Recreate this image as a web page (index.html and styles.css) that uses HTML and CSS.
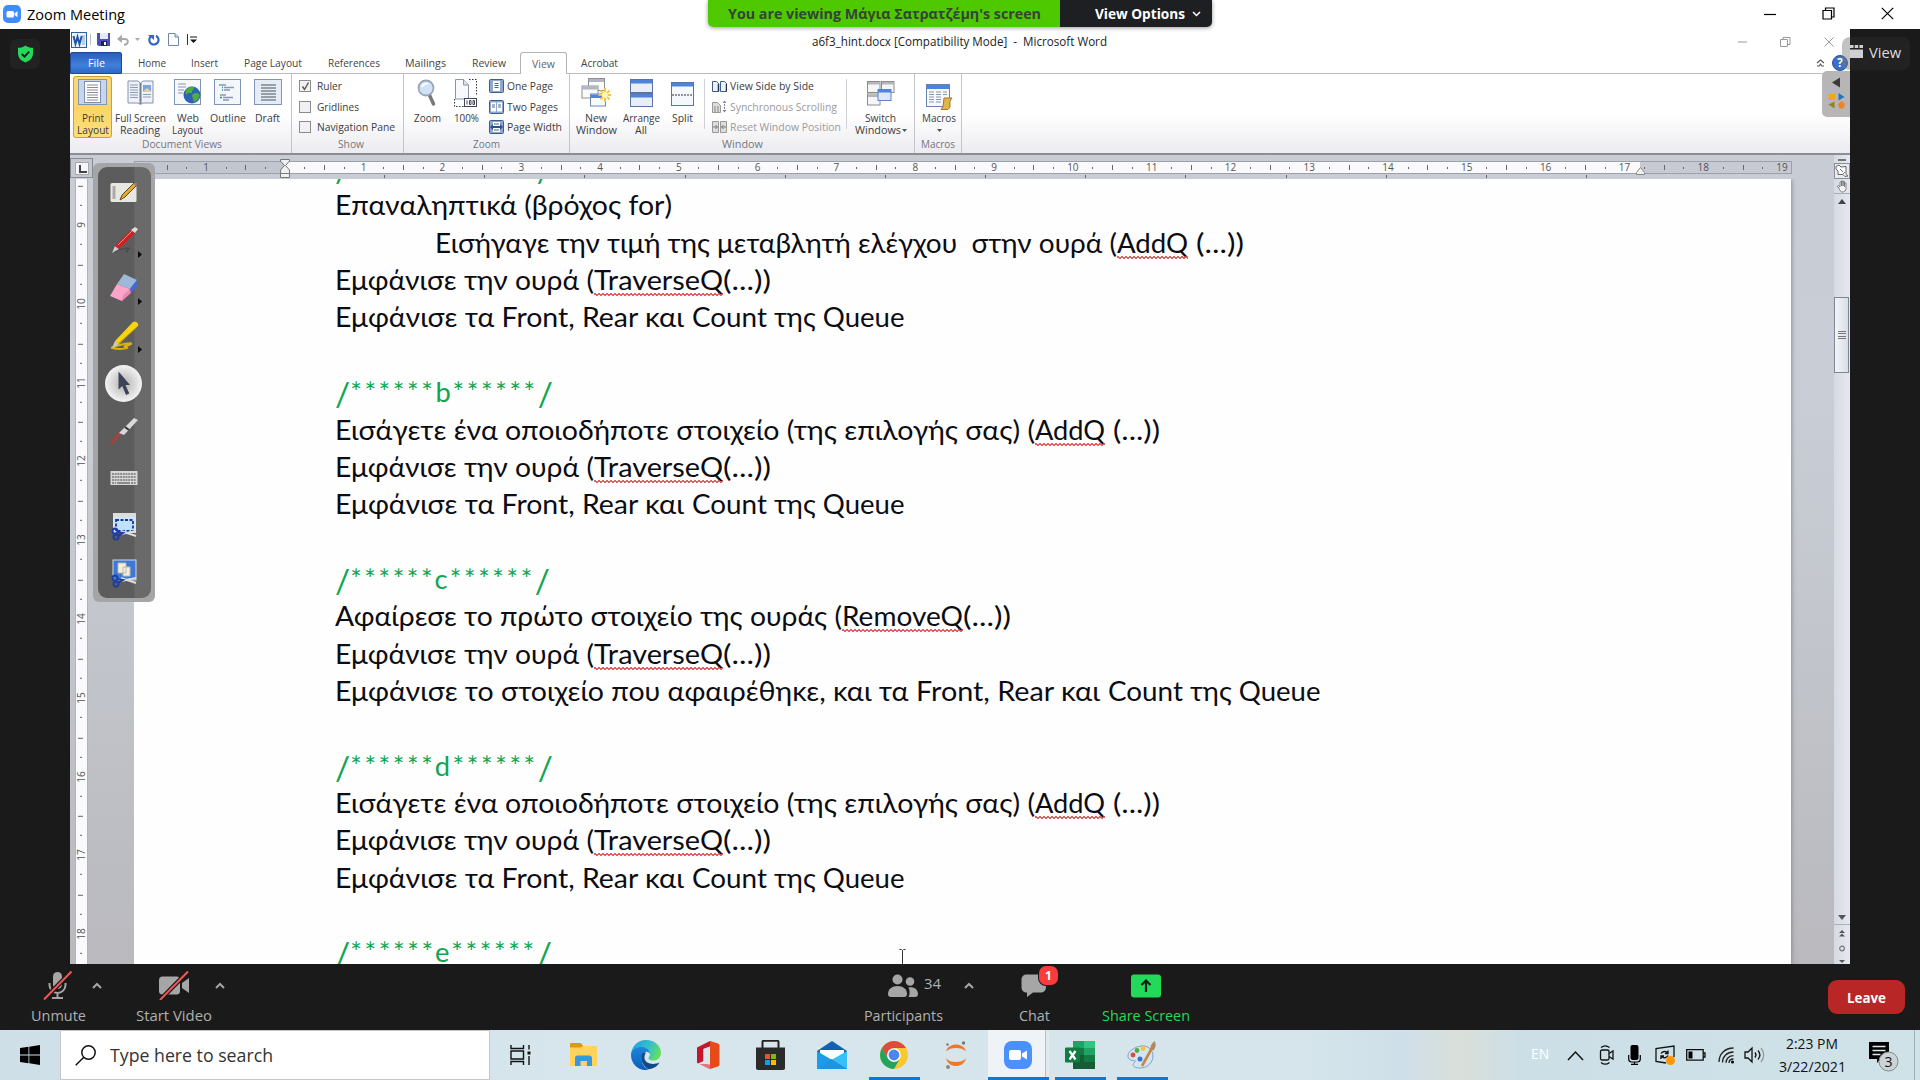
FILE: index.html
```html
<!DOCTYPE html>
<html lang="en">
<head>
<meta charset="utf-8">
<title>Zoom Meeting</title>
<link rel="stylesheet" href="styles.css">
</head>
<body>
<header class="titlebar">
  <svg class="zoom-logo" width="18" height="18" viewBox="0 0 18 18"><rect width="18" height="18" rx="5" fill="#3f8cff"/><rect x="3.5" y="6" width="7.5" height="6.5" rx="1.5" fill="#fff"/><path d="M11.6 8.2 14.5 6.3v5.8l-2.9-1.8z" fill="#fff"/></svg>
  <span class="fit" data-w="98">Zoom Meeting</span>
  <div class="win-ctl">
    <svg width="12" height="12" viewBox="0 0 12 12"><path d="M0 6.5h12" stroke="#000" stroke-width="1.2"/></svg>
    <svg width="13" height="13" viewBox="0 0 13 13" fill="none" stroke="#000" stroke-width="1.2"><path d="M1 3.5h8.5v8.5H1zM3.5 3.500V1h8.500v9H9.500"/></svg>
    <svg width="13" height="13" viewBox="0 0 13 13"><path d="M.8.8 12.200 12.200M12.200.8.8 12.200" stroke="#000" stroke-width="1.2"/></svg>
  </div>
</header>

<div class="share-banner">
  <div class="viewing"><span class="fit" data-w="313">You are viewing Μάγια Σατρατζέμη's screen</span></div>
  <div class="options"><span class="fit" data-w="90">View Options</span><svg width="9" height="6" viewBox="0 0 9 6"><path d="M1 1l3.500 3.500L8 1" fill="none" stroke="#fff" stroke-width="1.500"/></svg></div>
</div>

<main class="meeting">
  <aside class="side left"><div class="shield"><svg width="17" height="18" viewBox="0 0 17 18"><path d="M8.500.5c2 1.800 4.500 2.300 7.500 2.300v5.700c0 4.500-3.500 7.500-7.500 9C4.500 16 1 13 1 8.500V2.800c3 0 5.500-.5 7.500-2.300z" fill="#23d959"/><path d="M4.800 9l2.700 2.700 4.700-5" fill="none" stroke="#1a1a1a" stroke-width="1.900"/></svg></div></aside>

  <section class="word">
    <div class="word-title">
      <div class="qat">
        <svg width="16" height="16" viewBox="0 0 16 16"><rect x=".5" y=".5" width="15" height="15" fill="#eaf2fb" stroke="#2e5fa3"/><rect x="11" y="3" width="3" height="10" fill="#b9cde6"/><path d="M2.500 4l2 8 2-7 2 7 2.200-8" fill="none" stroke="#1f56a6" stroke-width="2"/></svg>
        <i class="bar"></i>
        <svg width="13" height="13" viewBox="0 0 13 13"><path d="M0 0h13v13H1.500L0 11.500z" fill="#4a4fb5"/><path d="M3 0h8v6H3z" fill="#e7e9f8"/><path d="M4 8h6v5H4z" fill="#202450"/><path d="M7 9h2v3H7z" fill="#fff"/></svg>
        <svg class="undo" width="13" height="12" viewBox="0 0 13 12"><path d="M2 5h5.500c5 0 4 5.500-.5 6" fill="none" stroke="#a9a9ad" stroke-width="2"/><path d="M0 5l5-4.500v8.500z" fill="#a9a9ad"/></svg>
        <svg class="dd" width="5" height="3" viewBox="0 0 5 3"><path d="M0 0h5L2.500 3z" fill="#aaa"/></svg>
        <svg class="redo" width="12" height="12" viewBox="0 0 12 12"><path d="M8 1.800a4.600 4.600 0 1 1-5.500 1" fill="none" stroke="#3465c4" stroke-width="2.200"/><path d="M0 1h6v5z" fill="#3465c4"/></svg>
        <svg class="pg" width="11" height="13" viewBox="0 0 11 13"><path d="M.5.5h6.500l3.500 3.500v8.500H.5z" fill="#fdfeff" stroke="#6f86ab"/><path d="M7 .5v3.500h3.500" fill="#cfdcf0" stroke="#6f86ab"/></svg>
        <i class="bar dark"></i>
        <svg class="cust" width="7" height="8" viewBox="0 0 7 8"><path d="M0 1h7" stroke="#111"/><path d="M0 3.500h7L3.500 7z" fill="#111"/></svg>
      </div>
      <span class="doc-name fit" data-w="295">a6f3_hint.docx [Compatibility Mode]  -  Microsoft Word</span>
      <div class="word-ctl">
        <svg width="9" height="9" viewBox="0 0 9 9"><path d="M0 5h9" stroke="#999"/></svg>
        <svg width="11" height="10" viewBox="0 0 11 10"><path d="M.5 2.500h7v7h-7zM3 2.500v-2h7v7H7.500" fill="none" stroke="#999"/></svg>
        <svg width="10" height="10" viewBox="0 0 10 10"><path d="M.5.500l9 9M9.500.500l-9 9" stroke="#999"/></svg>
      </div>
    </div>

    <nav class="tabs">
      <div class="tab file"><span class="fit" data-w="17">File</span></div>
      <div class="tab t-home"><span class="fit" data-w="28">Home</span></div>
      <div class="tab t-insert"><span class="fit" data-w="27">Insert</span></div>
      <div class="tab t-layout"><span class="fit" data-w="58">Page Layout</span></div>
      <div class="tab t-ref"><span class="fit" data-w="52">References</span></div>
      <div class="tab t-mail"><span class="fit" data-w="41">Mailings</span></div>
      <div class="tab t-review"><span class="fit" data-w="34">Review</span></div>
      <div class="tab active"><span class="fit" data-w="23">View</span></div>
      <div class="tab t-acro"><span class="fit" data-w="37">Acrobat</span></div>
      <div class="tab-end">
        <svg width="9" height="8" viewBox="0 0 9 8"><path d="M1 4l3.500-3L8 4M1 7h2.200l1.300-2 1.300 2H8" fill="none" stroke="#555" stroke-width="1.100"/></svg>
        <div class="help">?</div>
      </div>
    </nav>

    <div class="ribbon">
      <div class="group g-views">
        <div class="row">
          <div class="big on b-print"><svg width="29" height="26" viewBox="0 0 29 26"><rect x=".5" y=".5" width="28" height="25" fill="#c9d5ea" stroke="#8195b8"/><rect x="6.500" y="2.500" width="16" height="21" fill="#fff" stroke="#7c8eb0"/><path d="M9 6h11M9 8.500h11M9 11h11M9 13.500h11M9 16h11M9 18.500h11M9 21h11" stroke="#8a8a90"/></svg><span class="fit" data-w="22">Print</span><span class="fit" data-w="32">Layout</span></div>
          <div class="big b-full"><svg width="29" height="26" viewBox="0 0 29 26"><path d="M2 2h10l2.500 2L17 2h10v22H17l-2.500 1.500L12 24H2z" fill="#eef2f8" stroke="#8593aa"/><path d="M14.500 4v21" stroke="#70809a" stroke-width="2"/><path d="M4 6h8M4 8.500h8M4 11h8M4 13.500h8M4 16h8M4 18.500h8M17 15.500h8M17 18h8" stroke="#8f9bb0"/><rect x="17" y="6" width="8" height="6.500" fill="#7ba4e0"/><path d="M17 12.500l4-3.500 4 3.500z" fill="#e8d38c"/></svg><span class="fit" data-w="51">Full Screen</span><span class="fit" data-w="40">Reading</span></div>
          <div class="big b-web"><svg width="28" height="26" viewBox="0 0 28 26"><rect x=".5" y=".5" width="26" height="25" fill="#f6f8fc" stroke="#8195b8"/><path d="M4 5h8M4 8h8M4 11h6M4 14h5" stroke="#8a97b0"/><circle cx="18" cy="16" r="8.500" fill="#2e62b8"/><path d="M12 11c3-4 7-4 8-3s-2 3-2 5-4 0-5 2-2-2-1-4zM19 15c3-2 6-1 6.500 1s-3 7-6 7c1-3-3-5-.5-8z" fill="#4fae3d"/></svg><span class="fit" data-w="22">Web</span><span class="fit" data-w="31">Layout</span></div>
          <div class="big b-outline"><svg width="27" height="26" viewBox="0 0 27 26"><rect x=".5" y=".5" width="26" height="25" fill="#f3f6fb" stroke="#8195b8"/><path d="M5 6h7M10 8.500h10M10 11h6M6 16h6M9 18.500h10M9 21h6" stroke="#8a97b0" stroke-width="1.500"/><path d="M8 8.500h1M8 11h1M6 18.500h2" stroke="#2d8a8a" stroke-width="1.500"/></svg><span class="fit" data-w="36">Outline</span></div>
          <div class="big b-draft"><svg width="28" height="26" viewBox="0 0 28 26"><rect x=".5" y=".5" width="27" height="25" fill="#e6ecf5" stroke="#8195b8"/><path d="M7 6h15M7 9h15M7 12h15M7 15h15M7 18h15M7 21h15" stroke="#80858f" stroke-width="1.300"/></svg><span class="fit" data-w="25">Draft</span></div>
        </div>
        <span class="caption"><span class="fit" data-w="80">Document Views</span></span>
      </div>
      <div class="group g-show">
        <div class="stack">
          <div><i class="cb"><svg width="9" height="9" viewBox="0 0 9 9"><path d="M1.500 4.500l2 3 4-7" fill="none" stroke="#555" stroke-width="1.400"/></svg></i><span class="fit" data-w="25">Ruler</span></div>
          <div><i class="cb"></i><span class="fit" data-w="42">Gridlines</span></div>
          <div><i class="cb"></i><span class="fit" data-w="78">Navigation Pane</span></div>
        </div>
        <span class="caption"><span class="fit" data-w="26">Show</span></span>
      </div>
      <div class="group g-zoom">
        <div class="row">
          <div class="big b-zoom"><svg width="20" height="28" viewBox="0 0 20 28"><path d="M12 15l4.500 10" stroke="#77777c" stroke-width="3.500" stroke-linecap="round"/><circle cx="9" cy="9" r="7.500" fill="#cfe2f8" stroke="#9aa5b8" stroke-width="1.800"/><path d="M5 8c1-3 4-4 6-3" stroke="#fff" stroke-width="2" fill="none"/></svg><span class="fit" data-w="27">Zoom</span></div>
          <div class="big b-hund"><svg width="24" height="28" viewBox="0 0 24 28"><path d="M15 .5h7.500V16M.5 20v7.500h9" fill="none" stroke="#333" stroke-dasharray="1.500 1.500"/><path d="M1.500.5h8l5 5.500v14h-13z" fill="#f7f9fd" stroke="#8a95a8"/><path d="M9.500.5v5.500h5" fill="#dbe3f0" stroke="#8a95a8"/><rect x="10.500" y="19.500" width="12" height="8" fill="#fff" stroke="#445"/><path d="M13 21.500v4M15.500 21.500h1.500v4h-1.500zM19 21.500h1.500v4H19z" stroke="#445" fill="none"/></svg><span class="fit" data-w="25">100%</span></div>
          <div class="stack s-zoom">
            <div><svg width="15" height="14" viewBox="0 0 15 14"><rect x=".5" y=".5" width="14" height="13" rx="1" fill="#8ea8d0" stroke="#3c5c92"/><rect x="4" y="2" width="7" height="10" fill="#fff"/><path d="M5.500 4.500h4M5.500 6.500h4M5.500 8.500h4" stroke="#567"/></svg><span class="fit" data-w="46">One Page</span></div>
            <div><svg width="15" height="14" viewBox="0 0 15 14"><rect x=".5" y=".5" width="14" height="13" rx="1" fill="#8ea8d0" stroke="#3c5c92"/><path d="M2 2.500h5v9H2zM8 2.500h5v9H8z" fill="#fff"/><path d="M3 5h3M3 7h3M9 5h3M9 7h3" stroke="#567"/></svg><span class="fit" data-w="51">Two Pages</span></div>
            <div><svg width="15" height="14" viewBox="0 0 15 14"><rect x=".5" y=".5" width="14" height="13" rx="1" fill="#8ea8d0" stroke="#3c5c92"/><rect x="4" y="2" width="7" height="10" fill="#fff"/><path d="M5 4h5M5 10h5" stroke="#567"/><path d="M1 7l3-3v2h7V4l3 3-3 3V8H4v2z" fill="#2a4f95"/></svg><span class="fit" data-w="55">Page Width</span></div>
          </div>
        </div>
        <span class="caption"><span class="fit" data-w="27">Zoom</span></span>
      </div>
      <div class="group g-window">
        <div class="row">
          <div class="big b-new"><svg width="30" height="29" viewBox="0 0 30 29"><g stroke="#8c8f98" fill="#fafbfd"><rect x="7.500" y=".5" width="16" height="12"/><rect x="1" y="8" width="16" height="12"/><rect x="9.500" y="16" width="15" height="12" stroke="#7287b0"/></g><path d="M8 1h15v3H8zM1.500 8.500h15v3h-15z" fill="#b3b5c2"/><path d="M10 16.500h14v3.500H10z" fill="#4c84dc"/><path d="M24 10v14M17.500 17h12.500M19.500 12.500l9 9M28.500 12.500l-9 9" stroke="#f3c93a" stroke-width="2"/><circle cx="24" cy="17" r="3" fill="#fff6b8"/></svg><span class="fit" data-w="22">New</span><span class="fit" data-w="41">Window</span></div>
          <div class="big b-arr"><svg width="23" height="28" viewBox="0 0 23 28"><g fill="#e9effa" stroke="#5d74a3"><rect x=".5" y=".5" width="22" height="13"/><rect x=".5" y="14.500" width="22" height="13"/></g><path d="M1 1h21v3.500H1zM1 15h21v3.500H1z" fill="#4c84dc"/></svg><span class="fit" data-w="37">Arrange</span><span class="fit" data-w="12">All</span></div>
          <div class="big b-split"><svg width="23" height="25" viewBox="0 0 23 25"><rect x=".5" y=".5" width="22" height="23" fill="#f4f7fc" stroke="#5d74a3"/><path d="M1 1h21v3.500H1z" fill="#4c84dc"/><path d="M1 13h21" stroke="#333" stroke-dasharray="2 1"/></svg><span class="fit" data-w="21">Split</span></div>
          <i class="vsep"></i>
          <div class="stack s-win">
            <div><svg width="15" height="11" viewBox="0 0 15 11"><path d="M.5.500h4l2 2v8h-6zM8.500.500h4l2 2v8h-6z" fill="#eef3fb" stroke="#3c5c92"/><path d="M6.500 3v7.500M14.500 3v7.500" stroke="#1d2f55" stroke-width="1.500"/></svg><span class="fit" data-w="84">View Side by Side</span></div>
            <div class="off"><svg width="15" height="13" viewBox="0 0 15 13"><path d="M.5 2.500h5l3 3v7h-8z" fill="#ddd" stroke="#999"/><path d="M2 7h5M2 9h5M2 11h5M12.500 1v11" stroke="#888" stroke-dasharray="2 1"/><path d="M10.500 3l2-2.500 2 2.500zM10.500 10l2 2.500 2-2.500z" fill="#888"/></svg><span class="fit" data-w="107">Synchronous Scrolling</span></div>
            <div class="off"><svg width="15" height="12" viewBox="0 0 15 12"><path d="M.5.500h6v11h-6zM8.500.500h6v11h-6z" fill="#ddd" stroke="#999"/><path d="M1 6h4M10 6h4M3.500 4l2 2-2 2M11.500 4l-2 2 2 2" stroke="#777" fill="none"/></svg><span class="fit" data-w="111">Reset Window Position</span></div>
          </div>
          <i class="vsep two"></i>
          <div class="big b-switch"><svg width="28" height="25" viewBox="0 0 28 25"><g fill="#f6f6f8" stroke="#8c8c90"><rect x=".5" y=".5" width="12.500" height="11"/><rect x="14.500" y=".5" width="12.500" height="11"/><rect x=".5" y="13" width="12.500" height="11"/></g><path d="M1 1h12v2.500H1zM15 1h12v2.500H15zM1 13.500h12V16H1z" fill="#b5b6bc"/><rect x="11" y="8.500" width="13" height="11" fill="#dce8fa" stroke="#5d84c4"/><path d="M11 8.500h13v3H11z" fill="#4c84dc"/></svg><span class="fit" data-w="31">Switch</span><span class="lbl"><span class="fit" data-w="46">Windows</span><svg width="5" height="3" viewBox="0 0 5 3"><path d="M0 0h5L2.500 3z" fill="#555"/></svg></span></div>
        </div>
        <span class="caption"><span class="fit" data-w="41">Window</span></span>
      </div>
      <div class="group g-macro">
        <div class="row">
          <div class="big b-macro"><svg width="27" height="26" viewBox="0 0 27 26"><rect x=".5" y=".5" width="23" height="22" fill="#f6f8fc" stroke="#6b80ab"/><path d="M1 1h22v4H1z" fill="#4c84dc"/><path d="M3 8h5M3 10.500h5M3 13h5M3 15.500h5M3 18h5M10 8h5M10 10.500h5M10 13h5M10 15.500h5M10 18h5M17 8h4M17 10.500h4" stroke="#8c97ad"/><path d="M18 14h8l-2 3v6l-2 2.500h-7l2-3z" fill="#e0b54a" stroke="#a47a1e"/></svg><span class="fit" data-w="34">Macros</span><span class="lbl"><svg width="5" height="3" viewBox="0 0 5 3"><path d="M0 0h5L2.500 3z" fill="#555"/></svg></span></div>
        </div>
        <span class="caption"><span class="fit" data-w="34">Macros</span></span>
      </div>
    </div>

    <div class="workspace">
      <div class="desk">
        <div class="ruler-row">
          <div class="corner"><b></b></div>
          <div class="ruler">
            <i>1</i><i class="zero"></i><i>1</i><i>2</i><i>3</i><i>4</i><i>5</i><i>6</i><i>7</i><i>8</i><i>9</i><i>10</i><i>11</i><i>12</i><i>13</i><i>14</i><i>15</i><i>16</i><i>17</i><i>18</i><i>19</i>
          </div>
          <div class="tabstops"></div>
          <svg class="indent" width="10" height="20" viewBox="0 0 10 20" fill="#f0f0f2" stroke="#777"><path d="M.5.500h9V2L5.500 6.500 9.500 11v3.500h-9V11l4-4.500L.5 2z"/><path d="M.5 14.500h9v4h-9z"/></svg>
          <svg class="indent-r" width="9" height="8" viewBox="0 0 9 8"><path d="M4.500.500l4 5V7.500h-8v-2z" fill="#f0f0f2" stroke="#888"/></svg>
        </div>
        <div class="page-row">
          <div class="vruler"><div class="vr">
            <i>9</i><i>10</i><i>11</i><i>12</i><i>13</i><i>14</i><i>15</i><i>16</i><i>17</i><i>18</i>
          </div></div>
          <article class="page">
            <p class="mark"><span class="fit" data-w="217"><b>/</b>******a******<b>/</b></span></p>
            <p><span class="fit" data-w="337">Επαναληπτικά (βρόχος for)</span></p>
            <p class="tabbed"><span class="fit" data-w="682">Εισήγαγε την τιμή της μεταβλητή ελέγχου  στην ουρά (</span><span class="err"><span class="fit" data-w="71">AddQ</span></span><span class="fit" data-w="56"> (...))</span></p>
            <p><span class="fit" data-w="259">Εμφάνισε την ουρά (</span><span class="err"><span class="fit" data-w="129">TraverseQ</span></span><span class="fit" data-w="48">(...))</span></p>
            <p><span class="fit" data-w="310">Εμφάνισε τα Front, Rear </span><span class="fit" data-w="46.5">και </span><span class="fit" data-w="82">Count </span><span class="fit" data-w="130.5">της Queue</span></p>
            <p></p>
            <p class="mark"><span class="fit" data-w="218"><b>/</b>******b******<b>/</b></span></p>
            <p><span class="fit" data-w="700">Εισάγετε ένα οποιοδήποτε στοιχείο (της επιλογής σας) (</span><span class="err"><span class="fit" data-w="70">AddQ</span></span><span class="fit" data-w="55"> (...))</span></p>
            <p><span class="fit" data-w="259">Εμφάνισε την ουρά (</span><span class="err"><span class="fit" data-w="129">TraverseQ</span></span><span class="fit" data-w="48">(...))</span></p>
            <p><span class="fit" data-w="310">Εμφάνισε τα Front, Rear </span><span class="fit" data-w="46.5">και </span><span class="fit" data-w="82">Count </span><span class="fit" data-w="130.5">της Queue</span></p>
            <p></p>
            <p class="mark"><span class="fit" data-w="215"><b>/</b>******c******<b>/</b></span></p>
            <p><span class="fit" data-w="507">Αφαίρεσε το πρώτο στοιχείο της ουράς (</span><span class="err"><span class="fit" data-w="121">RemoveQ</span></span><span class="fit" data-w="48">(...))</span></p>
            <p><span class="fit" data-w="259">Εμφάνισε την ουρά (</span><span class="err"><span class="fit" data-w="129">TraverseQ</span></span><span class="fit" data-w="48">(...))</span></p>
            <p><span class="fit" data-w="498">Εμφάνισε το στοιχείο που αφαιρέθηκε, </span><span class="fit" data-w="228">και τα Front, Rear </span><span class="fit" data-w="46.5">και </span><span class="fit" data-w="82">Count </span><span class="fit" data-w="130.5">της Queue</span></p>
            <p></p>
            <p class="mark"><span class="fit" data-w="218"><b>/</b>******d******<b>/</b></span></p>
            <p><span class="fit" data-w="700">Εισάγετε ένα οποιοδήποτε στοιχείο (της επιλογής σας) (</span><span class="err"><span class="fit" data-w="70">AddQ</span></span><span class="fit" data-w="55"> (...))</span></p>
            <p><span class="fit" data-w="259">Εμφάνισε την ουρά (</span><span class="err"><span class="fit" data-w="129">TraverseQ</span></span><span class="fit" data-w="48">(...))</span></p>
            <p><span class="fit" data-w="310">Εμφάνισε τα Front, Rear </span><span class="fit" data-w="46.5">και </span><span class="fit" data-w="82">Count </span><span class="fit" data-w="130.5">της Queue</span></p>
            <p></p>
            <p class="mark"><span class="fit" data-w="217"><b>/</b>******e******<b>/</b></span></p>
          </article>
        </div>
      </div>
      <div class="scroll">
        <i class="split"></i>
        <svg class="boxed" width="16" height="16" viewBox="0 0 16 16"><rect x=".5" y=".5" width="15" height="15" fill="#e9eaf0" stroke="#8b8f98"/><path d="M2 3.500L5 2l2 2 5-.5v8l2 1.500-3 .5-2-2H4V8L2 6z" fill="#fafafa" stroke="#666"/><path d="M6 6l3 3M9 11l2-2" stroke="#777"/></svg>
        <svg width="12" height="13" viewBox="0 0 12 13"><path d="M3 8L1 6.500l1.500-1L4 7V2l1.500-.500V6 1h1.500v5-4.500H8.500V7 3H10v5.500c0 2-1.500 3.500-3.500 3.500C4.500 12 3.500 10 3 8z" fill="#f5f5f7" stroke="#777" stroke-width=".9"/></svg>
        <i class="line"></i>
        <svg class="up" width="8" height="5" viewBox="0 0 8 5"><path d="M0 5l4-5 4 5z" fill="#444"/></svg>
        <div class="track"><div class="thumb"><i></i></div></div>
        <svg class="dn" width="8" height="5" viewBox="0 0 8 5"><path d="M0 0h8L4 5z" fill="#555"/></svg>
        <i class="line"></i>
        <svg class="pgup" width="6" height="7" viewBox="0 0 6 7"><path d="M0 3l3-3 3 3zM0 6.500l3-3 3 3z" fill="#555"/></svg>
        <svg class="ring" width="6" height="7" viewBox="0 0 6 7"><circle cx="3" cy="3.500" r="2.300" fill="none" stroke="#777" stroke-width="1.200"/></svg>
        <svg class="pgdn" width="6" height="4" viewBox="0 0 6 4"><path d="M0 0h6L3 3z" fill="#555"/></svg>
      </div>
    </div>
  </section>
  <aside class="side right"></aside>

  <div class="palette"><div class="inner">
    <svg viewBox="0 0 30 30"><rect x="1.500" y="5" width="26" height="19" rx="1.500" fill="#e9e7e2"/><path d="M3.500 8h3v13h-3z" fill="#aaa"/><path d="M11 22l2-5L25 5l3 2-12 12z" fill="#e6a92c" stroke="#5c4a22"/><path d="M24 6l3-1.500 1.500 1.500-1.500 2z" fill="#888"/></svg>
    <svg viewBox="0 0 30 30"><path d="M5 26c8-4 18-5 15-3s-5 2-1 3" fill="none" stroke="#444"/><path d="M3 27l3-7 4 3z" fill="#ccc"/><path d="M6 20L22 4l4 3-16 16z" fill="#d31f1f"/><path d="M22 4l4-3 3 2-3 4z" fill="#ddd"/><path d="M9 19L23 5" stroke="#f58b8b"/></svg>
    <svg viewBox="0 0 30 30"><path d="M8 11L15 1l13 6-7 9z" fill="#9db8d8"/><path d="M28 7l1 5-7 8-1-4z" fill="#4567dc"/><path d="M8 11l13 5-8 12L1 23z" fill="#fba5cb"/><path d="M21 16l1 4-9 8 1-6z" fill="#f086b4"/></svg>
    <svg viewBox="0 0 30 30"><path d="M2 27c9-4 22-6 20-4s-10 2-5 3-5 3-14 1" fill="none" stroke="#dcae1c" stroke-width="2"/><path d="M3 27l3-7 4 3z" fill="#ccc"/><path d="M6 20L24 1c3-1 6 1 5 4L10 23z" fill="#f7d40e"/><path d="M10 22L28 6" stroke="#b99405"/></svg>
    <svg class="cur" viewBox="0 0 37 37"><defs><radialGradient id="cg"><stop offset=".3" stop-color="#c4c4c4"/><stop offset="1" stop-color="#f4f4f4"/></radialGradient></defs><circle cx="18.500" cy="18.500" r="18.500" fill="url(#cg)"/><path d="M13.500 6.500v18l3.800-3.500 3.700 9 3.300-1.500-3.800-8.500h4.500z" fill="#3c4258"/></svg>
    <svg viewBox="0 0 30 30"><path d="M2 28l9-11" stroke="#a8403c" stroke-width="3"/><path d="M10 17L25 2l4 2-14 15z" fill="#d8d8d8"/><path d="M16 11l4 3" stroke="#333" stroke-width="2"/></svg>
    <svg viewBox="0 0 30 30"><rect x="1.500" y="8" width="27" height="14" fill="#d8d8d8"/><path d="M3 11h24M3 14h24M3 17h24M3 20h4M22 20h5" stroke="#777" stroke-width="1.600" stroke-dasharray="2 .7"/><path d="M8 20h13" stroke="#777" stroke-width="1.600"/></svg>
    <svg viewBox="0 0 30 30"><rect x="4" y="2" width="23" height="20" fill="#cfe5fb"/><path d="M4 2h23v4H4z" fill="#ddd"/><rect x="7" y="9" width="17" height="11" fill="#bfe0ff" stroke="#113c9c" stroke-width="1.800" stroke-dasharray="3 1.500"/><path d="M12 23l15-3M12 20l15 5" stroke="#ddd" stroke-width="2"/><g fill="none" stroke="#1f3f9f" stroke-width="2"><circle cx="6" cy="20" r="2.500"/><circle cx="7" cy="26" r="2.500"/><path d="M8 21l6 1-5 3"/></g></svg>
    <svg viewBox="0 0 30 30"><rect x="4" y="2" width="23" height="20" fill="#3f78d6" stroke="#cfd8e8"/><path d="M9 5h8v10H9zM14 9h7v9h-7z" fill="#f4efdc" stroke="#bba"/><path d="M12 23l15-3M12 20l15 5" stroke="#ddd" stroke-width="2"/><g fill="none" stroke="#1f3f9f" stroke-width="2"><circle cx="6" cy="20" r="2.500"/><circle cx="7" cy="26" r="2.500"/><path d="M8 21l6 1-5 3"/></g></svg>
  </div>
  <svg class="more" width="4" height="102" viewBox="0 0 4 102"><path d="M0 0l4 3.500L0 7zM0 47l4 3.500L0 54zM0 95l4 3.500-4 3.500z" fill="#0a0a0a"/></svg>
  </div>

  <div class="view-blob"><svg width="13" height="13" viewBox="0 0 13 13"><path d="M0 0h3.500v3H0zM4.700 0h3.500v3H4.700zM9.400 0H13v3H9.400zM0 4.500h13V13H0z" fill="#cfcfcf"/></svg><span class="fit" data-w="32">View</span></div>
  <div class="side-tab"><svg width="28" height="46" viewBox="0 0 28 46"><path d="M10 11.500l8-5v10z" fill="#3a3a3a"/><path d="M6.500 23h7v6h-7z" fill="#f0a818"/><path d="M16.500 22l6 4-6 3.500z" fill="#1f78b8"/><path d="M6.500 33.500l6-3v7z" fill="#8d8420"/><path d="M19.500 30l3.500 3-1.500 4.500h-4L16 33z" fill="#f58220"/></svg></div>
  <svg class="ibeam" width="7" height="17" viewBox="0 0 7 17"><path d="M.5.500h2l1 1 1-1h2M3.500 1.500v13M.5 15.500h2l1-1 1 1h2" fill="none" stroke="#333"/></svg>
</main>

<footer class="meetbar">
  <div class="mb m-mic"><svg width="30" height="30" viewBox="0 0 30 30"><rect x="10" y="2" width="9" height="17" rx="4.500" fill="#a6a6a6"/><path d="M6.500 13v2a8 8 0 0 0 16 0v-2M14.500 23v4M9 28h11" fill="none" stroke="#a6a6a6" stroke-width="2"/><path d="M1 29.500L28.500 1.500" stroke="#1a1a1a" stroke-width="4.500"/><path d="M1 29.500L28.500 1.500" stroke="#f25555" stroke-width="2"/></svg><span class="fit" data-w="55">Unmute</span></div>
  <svg class="chev c1" width="10" height="7" viewBox="0 0 10 7"><path d="M1 6l4-4 4 4" fill="none" stroke="#a6a6a6" stroke-width="2"/></svg>
  <div class="mb m-vid"><svg width="32" height="30" viewBox="0 0 32 30"><rect x="1" y="6.500" width="21" height="18" rx="3.500" fill="#a6a6a6"/><path d="M24 13l7-5v15l-7-5z" fill="#a6a6a6"/><path d="M2 30L30 1.500" stroke="#1a1a1a" stroke-width="4.500"/><path d="M2 30L30 1.500" stroke="#f25555" stroke-width="2"/></svg><span class="fit" data-w="76">Start Video</span></div>
  <svg class="chev c2" width="10" height="7" viewBox="0 0 10 7"><path d="M1 6l4-4 4 4" fill="none" stroke="#a6a6a6" stroke-width="2"/></svg>
  <div class="mb m-part"><div class="ic"><svg width="30" height="30" viewBox="0 0 30 30" fill="#a6a6a6"><circle cx="9.500" cy="9.500" r="5"/><path d="M0 24c0-5 4-8 9.500-8s9.500 3 9.500 8c0 2-1 3-3 3H3c-2 0-3-1-3-3z"/><circle cx="22" cy="11.500" r="4.300"/><path d="M20.500 17.500c5.500-.8 9.500 2 9.500 6.500 0 2-1 3-3 3h-6.500c1.500-3 1.500-6.500 0-9.500z"/></svg><span class="fit" data-w="17">34</span></div><span class="fit" data-w="79">Participants</span></div>
  <svg class="chev c3" width="10" height="7" viewBox="0 0 10 7"><path d="M1 6l4-4 4 4" fill="none" stroke="#a6a6a6" stroke-width="2"/></svg>
  <div class="mb m-chat"><svg width="26" height="30" viewBox="0 0 26 30"><path d="M6 4.500h13c3.500 0 6 2 6 5.500v7c0 3.500-2 5.500-6 5.500h-7L6 27v-4.500c-3.500 0-5.500-2-5.500-5.500v-7c0-3.500 2-5.500 5.500-5.500z" fill="#a6a6a6"/></svg><b class="badge">1</b><span class="fit" data-w="31">Chat</span></div>
  <div class="mb m-share"><svg width="30" height="30" viewBox="0 0 30 30"><rect y="4.500" width="30" height="23" rx="3" fill="#23d959"/><path d="M15 22V11M10.500 15l4.500-4.500 4.500 4.500" fill="none" stroke="#1a1a1a" stroke-width="2.200"/></svg><span class="fit" data-w="88">Share Screen</span></div>
  <button class="leave"><span class="fit" data-w="39">Leave</span></button>
</footer>

<footer class="taskbar">
  <svg class="start" width="20" height="20" viewBox="0 0 20 20"><path d="M0 3l8.500-1.200v7.700H0zM9.300 1.700L20 0v9.500H9.300zM0 10.500h8.500v7.700L0 17zM9.300 10.500H20V20L9.300 18.300z" fill="#000"/></svg>
  <div class="search"><svg width="22" height="21" viewBox="0 0 22 21"><circle cx="13.500" cy="7.500" r="6.700" fill="none" stroke="#111" stroke-width="1.500"/><path d="M8.800 12.300L.7 20.300" stroke="#111" stroke-width="1.500"/></svg><span class="fit" data-w="163">Type here to search</span></div>
  <div class="apps">
    <div class="app a-tv"><svg width="22" height="20" viewBox="0 0 22 20" fill="none" stroke="#111" stroke-width="1.400"><path d="M1 0v3.500h12.500V0M1 20v-3.500h12.500V20M1 6h12.500v8H1zM19 0v4.500M19 11v9"/><path d="M17.500 6.500h3v3h-3z" fill="#111" stroke="none"/></svg></div>
    <div class="app a-exp"><svg width="28" height="24" viewBox="0 0 28 24"><path d="M0 1.500C0 .5.500 0 1.500 0h9.500l2.500 3h13.500v20H0z" fill="#ffd35c"/><path d="M0 1.500C0 .5.500 0 1.500 0H11l2 3-2 1.500H0z" fill="#dd9a10"/><path d="M5 23v-8c0-1.500 1-2.500 2.500-2.500h12c1.500 0 2.500 1 2.500 2.500v8h-5v-5h-6.500v5z" fill="#3a96dd"/></svg></div>
    <div class="app a-edge"><svg width="30" height="30" viewBox="0 0 30 30"><defs><linearGradient id="e1" x1="0" y1=".2" x2="1" y2=".5"><stop offset="0" stop-color="#1f9fe0"/><stop offset=".6" stop-color="#35c1c8"/><stop offset="1" stop-color="#66e05c"/></linearGradient><linearGradient id="e2" x1="0" y1="0" x2="0" y2="1"><stop offset="0" stop-color="#1d86dc"/><stop offset="1" stop-color="#0a5fb8"/></linearGradient></defs><path d="M15 0c9 0 15 6 15 13 0 5-4 7.500-7.500 7.500-4 0-5-1.500-5-2.500s1.500-1.500 1.500-4c0-3-3-6-8-6C5 8 0 12 0 16 0 7 6 0 15 0z" fill="url(#e1)"/><path d="M0 15c0-4 4-8 10-8 5 0 9 3 9 7-1-2-3-2.500-4.500-2-3 1-4 4-4 6.500 0 5 3 9.500 7.500 11C8 32 0 24 0 15z" fill="url(#e2)"/><path d="M11 14c-2 5 0 11 6 15 4 .5 9-2 11.500-6.500-7 3-14 1-15-4-.3-2 .3-4 1.500-6-2-.3-3.300.3-4 1.500z" fill="#114a8b"/></svg></div>
    <div class="app a-off"><svg width="24" height="30" viewBox="0 0 24 30"><path d="M1 7.500L14 1v5.500L7.500 9v12L2 23.500c-1-.5-1-1-1-2z" fill="#c3182c"/><path d="M14 1l8 2.500c1 .5 1.500 1 1.500 2v19c0 1-.5 1.500-1.500 2L14 29z" fill="#e64a19"/><path d="M14 1v28L4 24l10 .5z" fill="#b71c1c"/><path d="M4 24l10 0v5z" fill="#f06f83"/><path d="M7.500 9L14 6.500v18l-6.500-1z" fill="#d9e6ec"/></svg></div>
    <div class="app a-store"><svg width="29" height="30" viewBox="0 0 29 30"><path d="M6.500 8V2c0-.7.500-1.200 1.200-1.200h13.600c.7 0 1.200.5 1.200 1.200v6" fill="none" stroke="#222" stroke-width="2"/><path d="M0 7.500h29V28c0 1-.7 2-2 2H2c-1.300 0-2-1-2-2z" fill="#2a2a2a"/><path d="M9 14h5v5H9z" fill="#f25022"/><path d="M15 14h5v5h-5z" fill="#7fba00"/><path d="M9 20h5v5H9z" fill="#00a4ef"/><path d="M15 20h5v5h-5z" fill="#ffb900"/></svg></div>
    <div class="app a-mail"><svg width="30" height="28" viewBox="0 0 30 28"><path d="M0 10L15 0l15 10v18H0z" fill="#1161b0"/><path d="M3 9h24v10H3z" fill="#fff"/><path d="M0 10l15 9-15 9z" fill="#1e9be8"/><path d="M30 10v18H0l16-10z" fill="#36c0f5"/><path d="M0 28l14.500-10L30 28z" fill="#1f93e0"/></svg></div>
    <div class="app run a-chr"><svg width="28" height="28" viewBox="0 0 28 28"><circle cx="14" cy="14" r="14" fill="#fbc92f"/><path d="M1.900 7A14 14 0 0 1 26.100 7H14a7 7 0 0 0-6 10.500z" fill="#dd4b3e"/><path d="M1.900 7A14 14 0 0 0 14 28l6-10.500a7 7 0 0 1-12 0z" fill="#1fa463"/><circle cx="14" cy="14" r="6.800" fill="#fff"/><circle cx="14" cy="14" r="5.400" fill="#4b87f0"/></svg></div>
    <div class="app a-jup"><svg width="24" height="28" viewBox="0 0 24 28"><path d="M2 10.500C3.500 5.500 7.500 3.500 12 3.500s8.500 2 10 7C19.500 8 16 7 12 7s-7.500 1-10 3.500zM2 17.500c1.500 5 5.500 7.500 10 7.500s8.500-2.500 10-7.500c-2.500 2.500-6 3.500-10 3.500s-7.500-1-10-3.500z" fill="#f37726"/><circle cx="19.500" cy="2" r="1.700" fill="#777"/><circle cx="3.500" cy="3.500" r="1.200" fill="#777"/><circle cx="4" cy="26" r="2" fill="#888"/></svg></div>
    <div class="app run cur-app a-zoom"><svg width="28" height="28" viewBox="0 0 28 28"><rect width="28" height="28" rx="8" fill="#4a90ff"/><rect x="5" y="9" width="12" height="10" rx="2" fill="#fff"/><path d="M18 12.500l5-3v9l-5-3z" fill="#fff"/></svg></div>
    <div class="app run a-xl"><svg width="30" height="28" viewBox="0 0 30 28"><path d="M8 0h22v28H8z" fill="#21a366"/><path d="M8 7h11v7H8z" fill="#107c41"/><path d="M19 0h11v7H19z" fill="#33c481"/><path d="M8 14h22v14H8z" fill="#185c37"/><path d="M19 14h11v7H19z" fill="#107c41"/><rect y="6.500" width="15" height="15" rx="1" fill="#107c41"/><path d="M4.500 10l6 8.500M10.500 10l-6 8.500" stroke="#fff" stroke-width="2.200"/></svg></div>
    <div class="app run a-paint"><svg width="30" height="28" viewBox="0 0 30 28"><path d="M14 5c7-1 12 4 12 10S21 27 13 27 5 23 8 21s-6 0-7-5S7 6 14 5z" fill="#d3e4f2" stroke="#7fa3c2"/><circle cx="6" cy="14" r="2.400" fill="#e04a3a"/><circle cx="10" cy="9.500" r="2.400" fill="#4fae3d"/><circle cx="16" cy="7.500" r="2.400" fill="#f4c436"/><circle cx="13" cy="18" r="2.500" fill="#3a72d0"/><path d="M15 25L25 7" stroke="#c78546" stroke-width="2.600"/><path d="M23.500 8c0-4 1-5 4-8 2 3 1.500 6-1 9.500z" fill="#b08a5c"/></svg></div>
  </div>
  <div class="tray">
    <span class="en"><span class="fit" data-w="18">EN</span></span>
    <svg class="t1" width="17" height="11" viewBox="0 0 17 11"><path d="M1 10l7.500-8L16 10" fill="none" stroke="#111" stroke-width="1.500"/></svg>
    <svg class="t2" width="16" height="20" viewBox="0 0 16 20"><g fill="none" stroke="#111" stroke-width="1.300"><rect x="1.500" y="5" width="8.500" height="10" rx="1.500"/><path d="M10 8.500l4-2.500v8l-4-2.500M2 2.500c2.500-2 6-2 8.500 0M2 17.500c2.500 2 6 2 8.500 0"/></g></svg>
    <svg class="t3" width="13" height="20" viewBox="0 0 13 20"><rect x="2.500" width="8" height="15" rx="2" fill="#000"/><path d="M.7 10v4c0 2 1 3 3 3h5.600c2 0 3-1 3-3v-4M6.500 17v2.300M3 19.300h7" fill="none" stroke="#000" stroke-width="1.200"/></svg>
    <svg class="t4" width="20" height="20" viewBox="0 0 20 20"><path d="M19 12V1L1 3.500v13L11 18" fill="none" stroke="#111" stroke-width="1.300"/><path d="M6 8.500C7.500 6 11 6 13 8M13 5.500v3h-3M13 10.500c-1.500 2.500-4.500 3-6.500 1M6 14v-3h3" fill="none" stroke="#111" stroke-width="1.400"/><circle cx="15.500" cy="15.500" r="4.500" fill="#ff9500"/></svg>
    <svg class="t5" width="20" height="12" viewBox="0 0 20 12"><path d="M.7.700h16.500v10.500H.7zM17.500 4h1.500v4h-1.500" fill="none" stroke="#111" stroke-width="1.300"/><path d="M2.500 2.500h4v7h-4z" fill="#000"/></svg>
    <svg class="t6" width="17" height="17" viewBox="0 0 17 17"><g fill="none" stroke="#222" stroke-width="1.300"><path d="M1 15C1 7 7 1 15.500 1"/><path d="M4.500 15.500C4.500 9.500 9 5 15.500 5"/><path d="M8 15.700c0-4 3-7 7.500-7"/><path d="M11 16c0-2.500 2-4 4.500-4"/></g><circle cx="14.500" cy="15" r="1.500"/></svg>
    <svg class="t7" width="22" height="18" viewBox="0 0 22 18"><g fill="none" stroke="#111" stroke-width="1.300"><path d="M1 6h3l4-4v14l-4-4H1z"/><path d="M11 6.500c1.200 1.500 1.200 3.500 0 5M14 4.500c2.300 2.700 2.300 6.300 0 9"/><path d="M17 2c3.500 4.500 3.500 9.500 0 14" stroke="#999"/></g></svg>
    <div class="clock"><span class="fit" data-w="52">2:23 PM</span><span class="fit" data-w="67">3/22/2021</span></div>
    <div class="notes"><svg width="34" height="34" viewBox="0 0 34 34"><path d="M1 4h20v17H13l-4 4v-4H1z" fill="#000"/><path d="M4.500 8.500h13M4.500 12.500h13M4.500 16.500h8" stroke="#dfe8ec" stroke-width="1.300"/><circle cx="20.500" cy="23.500" r="9.500" fill="#ccd3d6" stroke="#888"/></svg><b>3</b></div>
    <i class="peek"></i>
  </div>
</footer>
<script src="fit.js"></script>
</body>
</html>
```
FILE: styles.css
```css
* { box-sizing: border-box; }
body { margin: 0; width: 1920px; height: 1080px; overflow: hidden; display: flex; flex-direction: column; position: relative; background: #1a1a1a; font-family: "Open Sans", "Noto Sans", sans-serif; color: #333; }
svg { display: block; flex: none; }
i { font-style: normal; }
.fit { display: inline-block; white-space: pre; transform-origin: 0 50%; flex: none; }

/* window title */
.titlebar { height: 29px; flex: none; background: #fff; display: flex; align-items: center; padding: 0 26px 2px 3px; gap: 6px; font-size: 15px; color: #000; }
.win-ctl { margin-left: auto; display: flex; gap: 46px; align-items: center; }

.share-banner { position: absolute; left: 708px; top: 0; width: 504px; height: 27px; display: flex; border-radius: 0 0 5px 5px; overflow: hidden; box-shadow: 0 1px 4px rgba(0,0,0,.4); font-weight: 700; font-size: 14px; z-index: 3; }
.viewing { width: 352px; background: #4ec900; color: #36433a; display: flex; align-items: center; padding-left: 20px; }
.options { flex: 1; background: #1d1f22; color: #fff; display: flex; align-items: center; padding-left: 35px; gap: 7px; }

.meeting { height: 935px; flex: none; display: flex; position: relative; overflow: hidden; }
.side { width: 70px; flex: none; background: #1a1a1a; }
.shield { width: 30px; height: 30px; margin: 10px 0 0 10px; background: #222; border-radius: 6px; display: flex; align-items: center; justify-content: center; }

/* word window */
.word { width: 1780px; display: flex; flex-direction: column; background: #fff; }
.word-title { height: 23px; flex: none; display: flex; align-items: center; padding: 0 16px 3px 1px; font-size: 12px; }
.qat { display: flex; align-items: center; width: 741px; padding-top: 1px; }
.bar { width: 1px; height: 11px; background: #bbb; margin: 0 6px 0 3px; }
.bar.dark { background: #333; margin: 0 2px 0 8px; }
.undo { margin-left: 7px; } .dd { margin: 0 8px 0 5px; } .pg { margin-left: 8px; }
.doc-name { color: #222; margin-top: 4px; }
.word-ctl { margin-left: auto; display: flex; gap: 33px; padding-top: 5px; }

.tabs { height: 22px; flex: none; display: flex; border-bottom: 1px solid #b9bcc2; font-size: 11px; color: #444; }
.tab { display: flex; align-items: center; height: 22px; flex: none; padding-bottom: 1px; }
.file { width: 52px; justify-content: center; background: linear-gradient(#2a5db8, #3f80dc 60%, #2f68c2); color: #fff; border-radius: 2px 2px 0 0; border: 1px solid #1e4a97; }
.t-home { margin-left: 16px; } .t-insert { margin-left: 25px; } .t-layout { margin-left: 26px; } .t-ref { margin-left: 26px; } .t-mail { margin-left: 25px; } .t-review { margin-left: 26px; }
.active { margin-left: 14px; width: 47px; justify-content: center; border: 1px solid #b0b4ba; border-bottom: 0; border-radius: 3px 3px 0 0; background: #fff; color: #666; }
.t-acro { margin-left: 14px; }
.tab-end { margin: 0 2px 0 auto; display: flex; align-items: center; gap: 7px; }
.help { width: 16px; height: 16px; border-radius: 50%; background: #3c70c6; border: 1px solid #2a5298; color: #fff; font: 700 12px/14px "Open Sans", sans-serif; text-align: center; }

.ribbon { height: 81px; flex: none; display: flex; background: linear-gradient(#fff 50%, #ebebf0); border-bottom: 2px solid #8b8e94; font-size: 11px; line-height: 12px; color: #3b3b42; }
.group { flex: none; display: flex; flex-direction: column; justify-content: space-between; border-right: 1px solid #c3c5cb; }
.g-views { width: 222px; padding-left: 3px; } .g-show { width: 112px; padding-left: 7px; } .g-zoom { width: 166px; } .g-window { width: 345px; } .g-macro { width: 47px; }
.row { display: flex; height: 64px; }
.big { display: flex; flex-direction: column; align-items: center; padding-top: 5px; flex: none; height: 64px; }
.big > svg { margin-bottom: 7px; }
.big svg[height="28"] { margin-bottom: 5px; }
.big svg[height="29"] { margin: -1px 0 5px; }
.on { background: linear-gradient(#fcd978, #fbd468 50%, #fde07a); outline: 1px solid #c9a040; outline-offset: -1px; border-radius: 3px; margin-top: 2px; height: 62px; padding-top: 3px; }
.b-print { width: 39px; } .b-full { width: 56px; } .b-web { width: 39px; } .b-outline { width: 41px; } .b-draft { width: 39px; }
.b-zoom { margin-left: 8px; width: 30px; } .b-hund { margin-left: 10px; width: 28px; }
.b-new { width: 52px; } .b-arr { width: 38px; } .b-split { width: 44px; } .b-split > svg { margin: 3px 0 5px; } .b-switch { width: 67px; } .b-switch > svg { margin: 2px 0 6px; } .b-macro { width: 48px; } .b-macro > svg { margin: 5px 0 2px; }
.lbl { display: flex; align-items: center; gap: 1px; height: 12px; }
.caption { height: 15px; text-align: center; color: #74767e; }
.stack { display: flex; flex-direction: column; padding-top: 2px; }
.stack > div { display: flex; align-items: center; height: 20.5px; gap: 3px; }
.stack .fit { line-height: 14px; }
.g-show .stack > div { gap: 6px; }
.s-zoom { margin-left: 9px; }
.cb { width: 12px; height: 12px; border: 1px solid #8a8c90; background: #f1f1f3; display: flex; align-items: center; justify-content: center; }
.vsep { width: 1px; height: 50px; margin: 5px 0 0; background: #cfd1d6; } .s-win { margin-left: 7px; width: 137px; }
.off { color: #9a9a9e; }

/* document area */
.workspace { flex: 1; display: flex; min-height: 0; background: linear-gradient(#c8ccd5, #c9ced6 30%, #b9b9be); }
.desk { width: 1764px; display: flex; flex-direction: column; }
.ruler-row { height: 24px; flex: none; position: relative; padding-left: 64px; display: flex; align-items: flex-start; }
.corner { position: absolute; left: 0; top: 3px; width: 23px; height: 20px; border: 1px solid #878b94; background: #c3c7cf; }
.corner b { position: absolute; left: 4px; top: 3px; width: 14px; height: 13px; background: #f6f6f8; border: 1px solid #aaa; }
.corner b::after { content: ""; position: absolute; left: 3px; top: 2px; width: 6px; height: 6px; border: solid #444; border-width: 0 0 2px 2px; }
.ruler { width: 1658px; height: 13px; margin-top: 6px; border: 1px solid #9ba0aa; overflow: hidden; display: flex; padding-left: 31.7px; background: linear-gradient(90deg, #c2c6ce 150px, #fafafc 150px 1505px, #c7cad3 1505px); }
.ruler i { width: 78.8px; height: 11px; flex: none; text-align: center; font: 10px/11px "Open Sans", sans-serif; color: #555; background: linear-gradient(#666,#666) 0 50%/1px 5px no-repeat, linear-gradient(#666,#666) 19.500px 50%/1px 2px no-repeat, linear-gradient(#666,#666) 59px 50%/1px 2px no-repeat; }
.tabstops { position: absolute; left: 314px; top: 20px; width: 1206px; height: 3px; background: repeating-linear-gradient(90deg, #666 0 1px, transparent 1px 100.17px); }
.indent { position: absolute; left: 210px; top: 4px; } .indent-r { position: absolute; left: 1566px; top: 12px; }
.page-row { flex: 1; display: flex; min-height: 0; }
.vruler { width: 64px; flex: none; padding-left: 5px; overflow: hidden; }
.vr { width: 13px; height: 810px; background: #fafafc; border: 1px solid #aeb3bc; border-width: 0 1px; padding-top: 7px; }
.vr i { height: 78.8px; display: flex; align-items: center; justify-content: center; writing-mode: vertical-rl; transform: rotate(180deg); font-size: 10px; line-height: 10px; color: #555; background: linear-gradient(#666,#666) 50% 100%/5px 1px no-repeat, linear-gradient(#666,#666) 50% 19.500px/2px 1px no-repeat, linear-gradient(#666,#666) 50% 59px/2px 1px no-repeat; }
.page { width: 1657px; flex: none; background: #fefefe; padding-left: 201px; overflow: hidden; box-shadow: 0 0 5px #777; clip-path: inset(0 -8px 0 0); font-family: Lato, "Open Sans", sans-serif; font-size: 26px; line-height: 37.35px; color: #0c0c12; }
.page p { margin: 0; height: 37.35px; display: flex; }
.page p:first-child { margin-top: -28.9px; }
.page .tabbed { padding-left: 100px; }
.page .mark { color: #10a551; letter-spacing: 2.5px; }
.mark b { font-weight: 400; font-size: 32px; line-height: 0; vertical-align: -4px; letter-spacing: 0; }
.err { position: relative; display: block; }
.err::after { content: ""; position: absolute; left: 0; right: 0; top: 31px; height: 3px; background: linear-gradient(45deg, transparent 35%, #e0383c 35% 65%, transparent 65%) 0 0/4px 3px, linear-gradient(-45deg, transparent 35%, #e0383c 35% 65%, transparent 65%) 2px 0/4px 3px; opacity: .8; }

.scroll { width: 16px; display: flex; flex-direction: column; align-items: center; background: linear-gradient(90deg, #d6dae3, #e5e8f0); padding-top: 3px; }
.split { width: 8px; height: 2px; background: #777; margin: 1px 0 2px; }
.scroll .line { width: 16px; height: 1px; background: #aab0bb; }
.boxed { margin-bottom: 1px; } .up { margin: 5px 0 0; }
.track { flex: 1; width: 16px; padding-top: 93px; }
.thumb { width: 15px; height: 76px; background: linear-gradient(90deg, #f4f5f9, #dadde6); border: 1px solid #7f8793; display: flex; align-items: center; justify-content: center; }
.thumb i { width: 8px; height: 8px; background: repeating-linear-gradient(#777 0 1px, transparent 1px 2.300px); }
.dn { margin-bottom: 4px; } .pgup { margin-top: 5px; } .ring { margin: 8px 0 8px; }

/* annotation tools */
.palette { position: absolute; left: 93px; top: 134px; width: 62px; height: 439px; padding: 4px 4px 4px 5px; border-radius: 6px; background: #a5a5a7; }
.inner { height: 431px; border-radius: 9px; background: linear-gradient(90deg, #5c5c5c 36px, #6a6a6a 37px); display: flex; flex-direction: column; align-items: center; padding: 11px 2px 0 0; gap: 17.500px; }
.inner svg { width: 30px; height: 30px; }
.inner svg.cur { width: 37px; height: 37px; margin: -3.500px 0; }
.more { position: absolute; left: 45px; top: 88px; }
.view-blob { position: absolute; left: 1842px; top: 8px; width: 68px; height: 33px; border-radius: 8px; background: linear-gradient(90deg, rgba(120,120,120,.45) 8px, #222 8px); display: flex; align-items: center; gap: 6px; padding: 0 0 4px 8px; font-size: 15px; color: #ddd; }
.side-tab { position: absolute; left: 1822px; top: 42px; width: 28px; height: 46px; background: #b7b5b5; border-radius: 5px 0 0 5px; }
.ibeam { position: absolute; left: 899px; top: 920px; }

/* zoom controls */
.meetbar { height: 66px; flex: none; background: #1a1a1a; display: flex; position: relative; padding-top: 6px; font-size: 14px; color: #b0b0b0; }
.mb { display: flex; flex-direction: column; align-items: center; flex: none; position: relative; line-height: 20px; gap: 6px; }
.m-mic { margin-left: 18px; width: 80px; }
.chev { margin-top: 12px; } .c1 { margin-left: -6px; }
.m-vid { margin-left: 27px; width: 90px; } .c2 { margin-left: -4px; }
.m-part { margin-left: 637px; width: 82px; }
.ic { display: flex; gap: 6px; padding-left: 26px; align-self: flex-start; }
.ic .fit { margin-top: 4px; }
.c3 { margin-left: 20px; }
.m-chat { margin-left: 39px; width: 42px; }
.badge { position: absolute; left: 26px; top: -4px; width: 19px; height: 19px; border-radius: 7px; background: #f83b3b; color: #fff; font: 700 12px/19px "Open Sans", sans-serif; text-align: center; box-shadow: 0 0 0 1px #1a1a1a; }
.m-share { margin-left: 41px; width: 100px; color: #23d959; }
.leave { margin: 10px 15px 0 auto; width: 77px; height: 34px; padding: 0; border: 0; border-radius: 9px; background: #b92626; color: #fff; font: 700 14px "Open Sans", sans-serif; }

/* taskbar */
.taskbar { height: 50px; flex: none; display: flex; align-items: center; background: linear-gradient(90deg, #cfdfe8, #d6e6ec 30%, #d5e5eb 68%, #cfdfe9 73%, #d9dfda 76%, #cddfe6 79%, #cfe2e8); color: #111; }
.start { margin-left: 20px; }
.search { margin-left: 20px; width: 430px; height: 50px; background: #fff; border: 1px solid #c4c8ca; display: flex; align-items: center; padding-left: 14px; gap: 13px; font-size: 18px; color: #333; }
.apps { display: flex; height: 50px; margin-left: 1px; }
.app { width: 62px; flex: none; display: flex; align-items: center; justify-content: center; }
.a-tv { padding-right: 3px; }
.run { border-bottom: 3px solid #0a78d4; padding-top: 3px; width: 51px; margin: 0 5.500px; }
.app.cur-app { width: 61px; margin: 0 .5px; background: linear-gradient(90deg, #edf3f7 57px, #a9c6d8 57px 58px, #dfe9ee 58px); padding-right: 1px; }
.tray { margin-left: auto; display: flex; align-items: center; height: 50px; }
.en { color: #fff; font-size: 14px; margin-bottom: 4px; }
.t1 { margin-left: 18px; } .t2 { margin-left: 15px; } .t3 { margin-left: 13px; } .t4 { margin-left: 14px; } .t5 { margin-left: 11px; } .t6 { margin-left: 12px; } .t7 { margin-left: 9px; }
.clock { width: 68px; margin-left: 12px; display: flex; flex-direction: column; align-items: center; font-size: 14px; line-height: 23px; }
.notes { position: relative; margin-left: 22px; width: 34px; height: 34px; }
.notes b { position: absolute; left: 11px; top: 14px; width: 19px; font: 14px/19px "Open Sans", sans-serif; text-align: center; }
.peek { width: 1px; height: 50px; background: #9fb0b8; margin: 0 5px 0 12px; }
```
FILE: fit.js
```js
// Sets each label to the width given in its data-w attribute.
document.querySelectorAll('.fit').forEach(function (el) {
  var want = parseFloat(el.dataset.w);
  var natural = el.getBoundingClientRect().width;
  el.style.transform = 'scaleX(' + want / natural + ')';
  el.style.marginRight = (want - natural) + 'px';
});
```
